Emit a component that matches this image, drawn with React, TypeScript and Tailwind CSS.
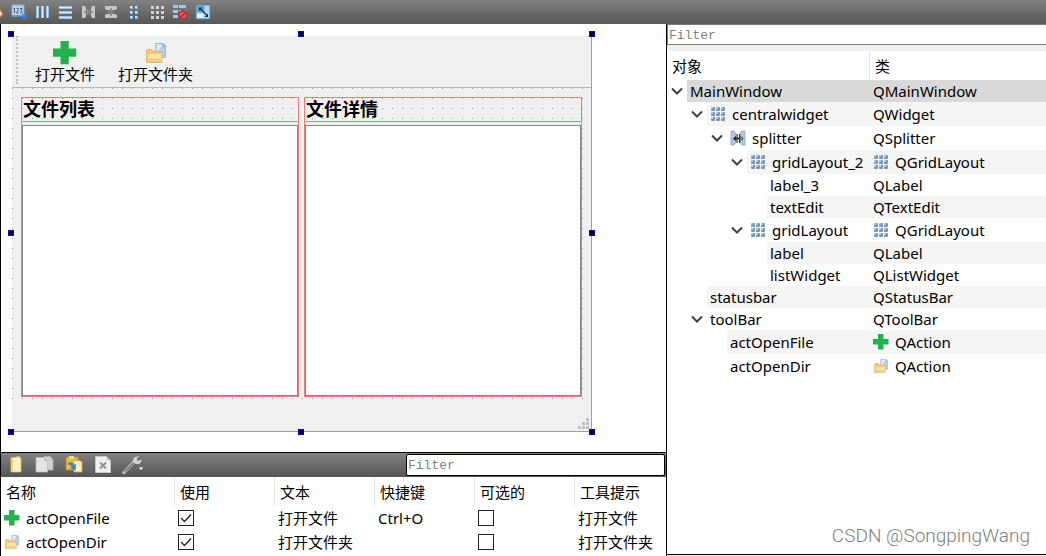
import type { ReactNode } from "react";

type IconProps = { className?: string };

function PlusIcon({ className = "h-4 w-4" }: IconProps) {
  return (
    <svg viewBox="0 0 16 16" className={className} aria-hidden="true">
      <path d="M5 0h5.500v5h5v5.500h-5v5H5v-5H0V5h5z" fill="#22b14c" />
    </svg>
  );
}

function FolderIcon({ className = "h-4 w-4 p-px" }: IconProps) {
  return (
    <svg viewBox="0 0 20 20" className={className} aria-hidden="true">
      <path d="M9.500.5h8l2 2.500v11.500h-10z" fill="#b4cff2" stroke="#8fb2e0" strokeWidth="0.8" />
      <path d="M10.500 1.500h6l-6 9z" fill="#dfecfb" />
      <path d="M17 .8v2.700h2.500z" fill="#7fa6dc" />
      <path d="M.5 7.500l1-1h4.500l1.500 2h8.500v11H.5z" fill="#f3c777" stroke="#dca95a" strokeWidth="0.8" />
      <path d="M2.500 11h12l1-1v9H2z" fill="#fbe3a0" />
      <path d="M1 15.500h14.500V19H1z" fill="#f5cf7c" />
    </svg>
  );
}

function GridIcon({ className = "h-4 w-4" }: IconProps) {
  return (
    <svg viewBox="0 0 16 16" className={className} aria-hidden="true">
      {[1, 6, 11].map((y) =>
        [1, 6, 11].map((x) => (
          <g key={`${x}-${y}`}>
            <rect x={x} y={y} width="4" height="4" rx="1" fill="#7695b5" />
            <rect x={x} y={y} width="2" height="2" rx="0.5" fill="#b4cce4" />
          </g>
        )),
      )}
    </svg>
  );
}

function SplitterIcon() {
  return (
    <svg viewBox="0 0 16 16" className="h-4 w-4" aria-hidden="true">
      <path d="M1 1h3l1.500 2v4.500L3.500 9l2 1.500V13L4 15H1zM15 1h-3l-1.500 2v4.500l2 1.500-2 1.500V13l1.500 2h3z" fill="#a9c8e4" stroke="#7c9bb8" strokeWidth="0.7" />
      <path d="M7 4v9M9.500 4v9" stroke="#333" strokeWidth="1.200" />
      <path d="M3 8.500L6 6v5zM13.500 8.500l-3-2.500v5zM5 7.800h7v1.400H5z" fill="#222" />
    </svg>
  );
}

function ChevronIcon() {
  return (
    <svg viewBox="0 0 12 8" className="h-2 w-3" aria-hidden="true">
      <path d="M1 1.500l5 5 5-5" fill="none" stroke="#404040" strokeWidth="2" />
    </svg>
  );
}

const layoutTools: { label: string; icon: ReactNode }[] = [
  {
    label: "Edit tab order",
    icon: (
      <>
        <path d="M1 1h12v11H1z" fill="#c3d0df" stroke="#92aac6" />
        <path d="M2.500 5l1-1v5M5.500 4.500q2-1 2 .8L5.500 9h2.200M9 4.500h2L10 6.200q1.500 1 .5 2.500L9 9" fill="none" stroke="#2f68b0" strokeWidth="1" />
        <path d="M1 11h8v2H1z" fill="#6d9ad2" />
        <path d="M7 12.500h6M11 10l3 2.500-3 2.500M15 9.500v6.500" fill="none" stroke="#3f83dc" strokeWidth="1.500" />
      </>
    ),
  },
  {
    label: "Lay out horizontally",
    icon: (
      <>
        <path d="M3.500 2v12M8.500 2v12M13.500 2v12" stroke="#7fb2e0" strokeWidth="3" />
        <path d="M3.500 2v12M8.500 2v12M13.500 2v12" stroke="#d3ebff" strokeWidth="1.500" />
      </>
    ),
  },
  {
    label: "Lay out vertically",
    icon: (
      <>
        <path d="M2 3.500h13M2 8.500h13M2 13.500h13" stroke="#7fb2e0" strokeWidth="3" />
        <path d="M2 3.500h13M2 8.500h13M2 13.500h13" stroke="#d3ebff" strokeWidth="1.500" />
      </>
    ),
  },
  {
    label: "Lay out horizontally in splitter",
    icon: (
      <>
        <path d="M2 2h3l1 2v3L4 8l2 1v3l-1 2H2zM15 2h-3l-1 2v3l2 1-2 1v3l1 2h3z" fill="#c6c6c6" />
        <path d="M4 8h9M7.500 5v6M9.500 5v6" stroke="#8e8e8e" strokeWidth="1.200" />
      </>
    ),
  },
  {
    label: "Lay out vertically in splitter",
    icon: (
      <>
        <path d="M2 2v3l2 1h3l1-2 1 2h3l2-1V2zM2 14v-3l2-1h3l1 2 1-2h3l2 1v3z" fill="#c6c6c6" />
        <path d="M8 4v8M5 7h6M5 9h6" stroke="#8e8e8e" strokeWidth="1.200" />
      </>
    ),
  },
  {
    label: "Lay out in a form",
    icon: (
      <>
        <path d="M4 2h3v3H4zM9 2h3v3H9zM4 7h3v3H4zM9 7h3v3H9zM4 12h3v3H4zM9 12h3v3H9z" fill="#7fb2e0" />
        <path d="M4 2h2v2H4zM9 2h2v2H9zM4 7h2v2H4zM9 7h2v2H9zM4 12h2v2H4zM9 12h2v2H9z" fill="#cbe5fc" />
      </>
    ),
  },
  {
    label: "Lay out in a grid",
    icon: (
      <path d="M2 2h3v3H2zM7 2h3v3H7zM12 2h3v3h-3zM2 7h3v3H2zM7 7h3v3H7zM12 7h3v3h-3zM2 12h3v3H2zM7 12h3v3H7zM12 12h3v3h-3z" fill="#d2d2d2" />
    ),
  },
  {
    label: "Break layout",
    icon: (
      <>
        <path d="M1 1h5v3H1zM7 1h7v3H7zM1 6h5v3H1zM1 11h5v3H1zM7 6h7v3H7z" fill="#9cc8ee" />
        <circle cx="11" cy="11" r="4" fill="#a98084" stroke="#cb2a30" strokeWidth="1.800" />
        <path d="M8.500 13.500l5-5" stroke="#cb2a30" strokeWidth="1.800" />
      </>
    ),
  },
  {
    label: "Adjust size",
    icon: (
      <>
        <path d="M1 1h14v14H1z" fill="#b7d6ef" stroke="#4388b9" />
        <path d="M1.500 1.500h8v7h-8z" fill="#62a2cd" />
        <path d="M2 10h6v4H2z" fill="#e3f0fa" />
        <path d="M5 4.500l7 7" stroke="#0e3454" strokeWidth="1.200" />
        <path d="M4 3.500h3.500L4 7zM13 13V9.500L9.500 13z" fill="#0e3454" />
      </>
    ),
  },
];

const actionTools: { label: string; icon: ReactNode }[] = [
  {
    label: "New action",
    icon: (
      <>
        <path d="M6 2l8-1.500 2 2V16H6z" fill="#fdf1bd" stroke="#dcc073" strokeWidth="0.8" />
        <path d="M6 2l2-.4V16H6z" fill="#f1d27c" />
      </>
    ),
  },
  {
    label: "Copy action",
    icon: (
      <>
        <path d="M10 .5h6l3 3V14h-9z" fill="#d0d0d0" stroke="#b2b2b2" strokeWidth="0.8" />
        <path d="M2 1.500h8l3.500 3.500v11H2z" fill="#e4e4e4" stroke="#bcbcbc" strokeWidth="0.8" />
        <path d="M10 1.500V5h3.500z" fill="#bdbdbd" />
      </>
    ),
  },
  {
    label: "Paste action",
    icon: (
      <>
        <path d="M3 1h12v13H3z" fill="#e8bd37" stroke="#b98b20" strokeWidth="0.8" />
        <path d="M6 0h5v2.500H6z" fill="#dadada" />
        <path d="M11 4.500h6l2 2V16h-8z" fill="#fbefbd" stroke="#c8a752" strokeWidth="0.8" />
        <path d="M4 8q5-4 7 1l2-1-.5 6.500L7 12l2-1q-1-2.500-5-3" fill="#3d7fd0" />
      </>
    ),
  },
  {
    label: "Delete action",
    icon: (
      <>
        <path d="M3.500.5h11l4 4V16.500h-15z" fill="#f0f0f0" stroke="#cbcbcb" strokeWidth="0.8" />
        <path d="M14.500.5v4h4z" fill="#c4c4c4" />
        <path d="M8 6.500l6 6M14 6.500l-6 6" stroke="#929292" strokeWidth="2" />
      </>
    ),
  },
  {
    label: "Configure",
    icon: (
      <>
        <path d="M3 16.500L13 6" stroke="#c4c4c4" strokeWidth="3.200" strokeLinecap="round" />
        <path d="M3.500 16L13 6.500" stroke="#6a6a6a" strokeWidth="1.200" />
        <path d="M18 .5q-5-.5-6 3t3.500 4.500 5-4.500L17 5l-1.500-2z" fill="#d2d2d2" />
        <path d="M17.500 11.500h5L20 14z" fill="#f2f2f2" />
      </>
    ),
  },
];

type TreeRow = {
  name: string;
  type: string;
  indent: string;
  open?: boolean;
  icon?: ReactNode;
  typeIcon?: ReactNode;
};

const treeRows: TreeRow[] = [
  { name: "MainWindow", type: "QMainWindow", indent: "pl-0", open: true },
  { name: "centralwidget", type: "QWidget", indent: "pl-5", open: true, icon: <GridIcon /> },
  { name: "splitter", type: "QSplitter", indent: "pl-10", open: true, icon: <SplitterIcon /> },
  { name: "gridLayout_2", type: "QGridLayout", indent: "pl-15", open: true, icon: <GridIcon />, typeIcon: <GridIcon /> },
  { name: "label_3", type: "QLabel", indent: "pl-20" },
  { name: "textEdit", type: "QTextEdit", indent: "pl-20" },
  { name: "gridLayout", type: "QGridLayout", indent: "pl-15", open: true, icon: <GridIcon />, typeIcon: <GridIcon /> },
  { name: "label", type: "QLabel", indent: "pl-20" },
  { name: "listWidget", type: "QListWidget", indent: "pl-20" },
  { name: "statusbar", type: "QStatusBar", indent: "pl-5" },
  { name: "toolBar", type: "QToolBar", indent: "pl-5", open: true },
  { name: "actOpenFile", type: "QAction", indent: "pl-10", typeIcon: <PlusIcon /> },
  { name: "actOpenDir", type: "QAction", indent: "pl-10", typeIcon: <FolderIcon /> },
];

const actions = [
  { name: "actOpenFile", text: "打开文件", shortcut: "Ctrl+O", icon: <PlusIcon /> },
  { name: "actOpenDir", text: "打开文件夹", shortcut: "", icon: <FolderIcon /> },
];

const handles = [
  "-left-1 -top-[5px]",
  "left-1/2 -top-[5px] -ml-1",
  "-right-1 -top-[5px]",
  "-left-1 top-1/2 -mt-1",
  "-right-1 top-1/2 -mt-1",
  "-left-1 -bottom-1",
  "left-1/2 -bottom-1 -ml-1",
  "-right-1 -bottom-1",
];

function rowColor(index: number) {
  if (index === 0) return "bg-[#d9d9d9]";
  return index % 2 ? "bg-[#f5f5f5]" : "bg-white";
}

function LayoutToolbar() {
  return (
    <header className="flex h-6 shrink-0 items-center overflow-hidden bg-linear-to-b from-[#828282] via-[#6b6b6b] to-[#575757]">
      <svg viewBox="0 0 4 12" className="h-3 w-1" aria-hidden="true">
        <path d="M0 3l3.500 5L0 12z" fill="#f47a2a" />
        <path d="M0 5l2 3-2 2z" fill="#fff" />
      </svg>
      <div className="flex items-center gap-[7px] pl-[7px]">
        {layoutTools.map((tool) => (
          <button key={tool.label} type="button" aria-label={tool.label} className="h-4 w-4">
            <svg viewBox="0 0 16 16" className="h-4 w-4">
              {tool.icon}
            </svg>
          </button>
        ))}
      </div>
    </header>
  );
}

function FormPane({ title }: { title: string }) {
  return (
    <section className="flex flex-1 flex-col border border-[#f57878]">
      <h2 className="h-6 border-b border-[#7ab87a] pl-px font-['Liberation_Serif','Noto_Sans_CJK_SC',serif] text-lg leading-6 font-bold text-black">
        {title}
      </h2>
      <div className="mt-[3px] flex-1 border border-[#828790] bg-white" />
    </section>
  );
}

function FormCanvas() {
  return (
    <div className="flex flex-1 bg-white pt-3 pr-[74px] pb-5 pl-[11px]">
      <div className="relative flex flex-1 flex-col border-r border-b border-[#a0a0a0] bg-[#f0f0f0]">
        <div className="flex h-13 items-start border-b border-[#b8b8b8] pl-1">
          <div className="h-12 border-l-2 border-dotted border-[#c0c0c0]" />
          <button type="button" className="ml-[17px] flex flex-col items-center pt-[5px]">
            <PlusIcon className="h-6 w-6" />
            <span className="leading-[18px]">打开文件</span>
          </button>
          <button type="button" className="ml-[23px] flex flex-col items-center pt-[5px]">
            <FolderIcon className="h-6 w-6 p-0.5" />
            <span className="leading-[18px]">打开文件夹</span>
          </button>
        </div>
        <div className="flex flex-1 bg-[radial-gradient(circle_at_0.5px_0.5px,#9a9a9a_0.6px,transparent_0.7px)] bg-size-[10px_10px] pt-[9px] pr-[9px] pb-0.5 pl-[9px]">
          <FormPane title="文件列表" />
          <div className="w-[5px] bg-[#f0f0f0]" />
          <FormPane title="文件详情" />
        </div>
        <div className="flex h-8 items-end justify-end p-0.5">
          <svg viewBox="0 0 11 11" className="h-[11px] w-[11px]" aria-hidden="true">
            <path d="M8 0h3v3H8zM4 4h3v3H4zM8 4h3v3H8zM0 8h3v3H0zM4 8h3v3H4zM8 8h3v3H8z" fill="#bfbfbf" />
          </svg>
        </div>
        {handles.map((place) => (
          <span key={place} className={`absolute h-1.5 w-1.5 border border-[#0000ee] bg-black ${place}`} />
        ))}
      </div>
    </div>
  );
}

function CheckBox({ label, checked }: { label: string; checked: boolean }) {
  return (
    <span className="relative block h-4 w-4">
      <input
        type="checkbox"
        aria-label={label}
        defaultChecked={checked}
        className="peer block h-4 w-4 appearance-none border border-[#222] bg-white"
      />
      <svg viewBox="0 0 16 16" className="pointer-events-none absolute inset-0 hidden peer-checked:block">
        <path d="M3 8l3.500 3.500L13 4.500" fill="none" stroke="#222" strokeWidth="1.300" />
      </svg>
    </span>
  );
}

function ActionEditor() {
  return (
    <section className="shrink-0 border-t border-black pb-0.5">
      <div className="flex h-6 items-center bg-linear-to-b from-[#828282] to-[#555]">
        <div className="flex flex-1 items-center gap-[9px] pl-1">
          {actionTools.map((tool) => (
            <button key={tool.label} type="button" aria-label={tool.label} className="h-5 w-5">
              <svg viewBox="0 0 20 18" className="h-5 w-5 overflow-visible">
                {tool.icon}
              </svg>
            </button>
          ))}
        </div>
        <input
          type="text"
          aria-label="Filter actions"
          placeholder="Filter"
          className="mr-px h-[22px] w-[259px] rounded-xs border border-black bg-white px-px pt-0.5 font-['Liberation_Mono',monospace] text-[13px] placeholder:text-[#808080]"
        />
      </div>
      <table className="w-full table-fixed border-separate border-spacing-0 text-left">
        <colgroup>
          <col className="w-[174px]" />
          <col className="w-25" />
          <col className="w-25" />
          <col className="w-25" />
          <col className="w-25" />
          <col />
        </colgroup>
        <thead>
          <tr className="h-[29px]">
            {["名称", "使用", "文本", "快捷键", "可选的", "工具提示"].map((title) => (
              <th key={title} className="border-r border-[#e5e5e5] p-0 pl-[5px] font-normal last:border-r-0">
                {title}
              </th>
            ))}
          </tr>
        </thead>
        <tbody>
          {actions.map((action) => (
            <tr key={action.name} className="h-6 leading-6 whitespace-nowrap">
              <td className="p-0 pl-[3px]">
                <span className="flex items-center gap-1.5">
                  {action.icon}
                  {action.name}
                </span>
              </td>
              <td className="p-0 pl-[3px]">
                <CheckBox label={`${action.name} 使用`} checked />
              </td>
              <td className="p-0 pl-[3px]">{action.text}</td>
              <td className="p-0 pl-[3px]">{action.shortcut}</td>
              <td className="p-0 pl-[3px]">
                <CheckBox label={`${action.name} 可选的`} checked={false} />
              </td>
              <td className="p-0 pl-[3px]">{action.text}</td>
            </tr>
          ))}
        </tbody>
      </table>
    </section>
  );
}

function ObjectInspector() {
  return (
    <aside className="flex w-[380px] shrink-0 flex-col border-l border-black bg-white">
      <input
        type="text"
        aria-label="Filter objects"
        placeholder="Filter"
        className="h-[21px] w-full border border-r-0 border-[#7a7a7a] bg-white px-px pt-0.5 font-['Liberation_Mono',monospace] text-[13px] placeholder:text-[#808080]"
      />
      <div className="h-1.5 bg-[#f0f0f0]" />
      <table className="w-full table-fixed border-separate border-spacing-0 text-left">
        <colgroup>
          <col className="w-[203px]" />
          <col />
        </colgroup>
        <thead>
          <tr className="h-[29px]">
            <th className="border-r border-[#e5e5e5] p-0 pl-[5px] font-normal">对象</th>
            <th className="p-0 pl-[5px] font-normal">类</th>
          </tr>
        </thead>
        <tbody>
          {treeRows.map((row, index) => (
            <tr key={row.name} className={row.icon || row.typeIcon ? "h-6" : "h-[22px]"}>
              <td className={`h-[inherit] p-0 ${row.indent}`}>
                <div className="flex h-full">
                  <span className="flex w-5 shrink-0 items-center justify-center">
                    {row.open && <ChevronIcon />}
                  </span>
                  <span className={`flex flex-1 items-center gap-1.5 pl-[3px] whitespace-nowrap ${rowColor(index)}`}>
                    {row.icon}
                    {row.name}
                  </span>
                </div>
              </td>
              <td className={`p-0 pl-[3px] ${rowColor(index)}`}>
                <span className="flex items-center gap-1.5">
                  {row.typeIcon}
                  {row.type}
                </span>
              </td>
            </tr>
          ))}
        </tbody>
      </table>
      <div className="flex flex-1 items-end justify-end px-4 pb-1.5 font-['Roboto',sans-serif] text-[19px] leading-6 font-light text-[#808080]">
        CSDN @SongpingWang
      </div>
      <div className="h-0.5 border-t border-black bg-[#f0f0f0]" />
    </aside>
  );
}

export default function App() {
  return (
    <div className="flex min-h-screen flex-col bg-white font-['Noto_Sans','Noto_Sans_CJK_SC',sans-serif] text-[15px] leading-[22px] text-black">
      <LayoutToolbar />
      <main className="flex flex-1">
        <div className="flex min-w-0 flex-1 flex-col border-l border-black">
          <FormCanvas />
          <ActionEditor />
        </div>
        <ObjectInspector />
      </main>
    </div>
  );
}
